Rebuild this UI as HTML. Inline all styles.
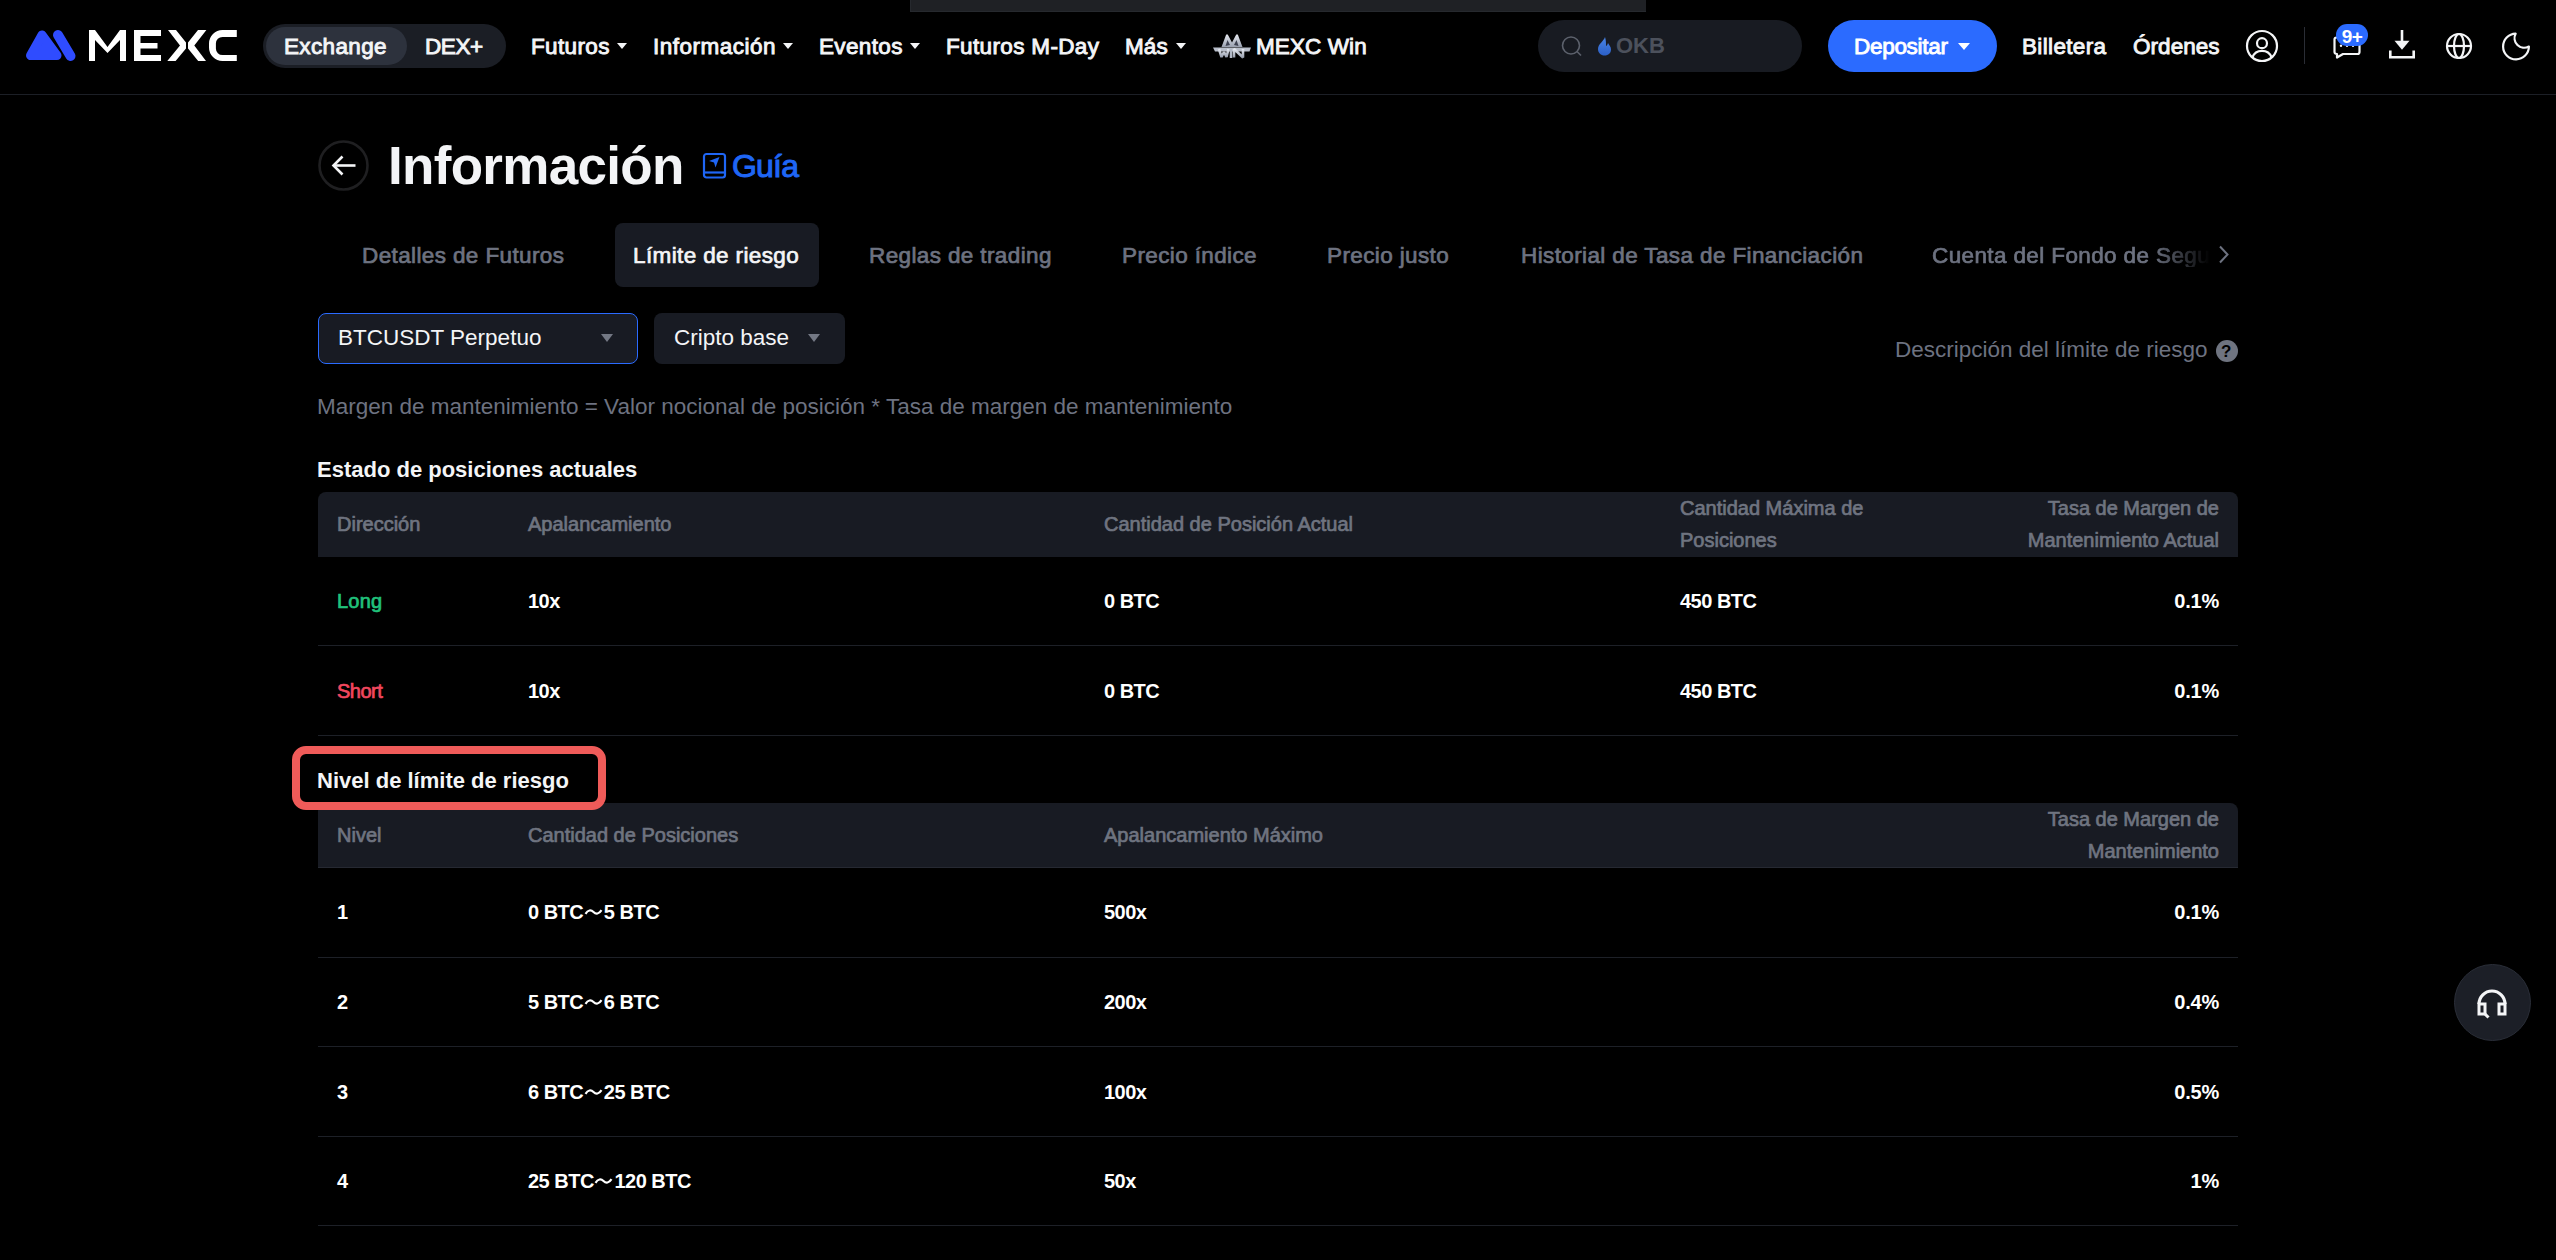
<!DOCTYPE html>
<html><head><meta charset="utf-8">
<style>
*{margin:0;padding:0;box-sizing:border-box}
html,body{width:2556px;height:1260px;overflow:hidden;background:#000;font-family:"Liberation Sans",sans-serif;color:#f3f4f6}
.a{position:absolute}
.t{position:absolute;white-space:nowrap;line-height:1}
.nav{font-size:22.5px;font-weight:400;color:#f4f5f7;-webkit-text-stroke:0.9px #f4f5f7;letter-spacing:0.35px}
.caret{position:absolute;width:0;height:0;border-left:5px solid transparent;border-right:5px solid transparent;border-top:6px solid #f4f5f7}
.gray{color:#6d7280}
.tab{font-size:22.5px;font-weight:400;color:#6d7280;-webkit-text-stroke:0.7px #6d7280;letter-spacing:0.38px}
.th{font-size:20px;color:#6f7480;-webkit-text-stroke:0.7px #6f7480;line-height:32px}
.td{font-size:20px;font-weight:700;color:#fff;letter-spacing:-0.5px}
.tl{display:inline-block;vertical-align:top;margin:0 0 0 -0.5px}
.line{position:absolute;left:318px;width:1920px;height:1px;background:#1d2027}
</style></head><body>

<!-- top gray strip -->
<div class="a" style="left:910px;top:0;width:736px;height:12px;background:#1f2125;border-left:1px solid #26292e;border-bottom:1px solid #26292e"></div>

<!-- header bottom border -->
<div class="a" style="left:0;top:94px;width:2556px;height:1px;background:#1c1f26"></div>

<!-- MEXC logo -->
<svg class="a" style="left:0;top:0" width="260" height="94" viewBox="0 0 260 94">
  <polygon points="42,35 30.5,55.5 57,55.5" fill="#2f4cff" stroke="#2f4cff" stroke-width="9" stroke-linejoin="round"/>
  <line x1="58" y1="35" x2="70.5" y2="56" stroke="#2f4cff" stroke-width="10" stroke-linecap="round"/>
  <g fill="#fff">
    <path d="M89 30h6l12.5 17 12.5-17h6v31h-6V40l-12.5 13L95 40v21h-6z"/>
    <path d="M134 30h27v6h-20.5v7h17v5.5h-17v6.6h20.5v5.9h-27z"/>
    <path d="M168 30H176L186 42.5V48.5L175.6 61H167.3L180 45.5Z"/>
    <path d="M206.4 30H198L188 42.5V48.5L198.2 61H206L194.3 45.5Z"/>
    <path d="M236.8 30h-14.3a13.5 13.5 0 0 0-13.5 13.5v4a13.5 13.5 0 0 0 13.5 13.5h14.3v-5.9h-14.3a6.6 6.6 0 0 1-6.6-6.6v-5a6.6 6.6 0 0 1 6.6-6.6h14.3z"/>
  </g>
</svg>

<!-- Exchange / DEX+ -->
<div class="a" style="left:263px;top:24px;width:243px;height:44px;border-radius:22px;background:#1b1e25"></div>
<div class="a" style="left:266px;top:27px;width:141px;height:38px;border-radius:19px;background:#2d323d"></div>
<div class="t nav" style="top:35.5px;left:284px">Exchange</div>
<div class="t nav" style="top:35.5px;left:425px;letter-spacing:-0.4px">DEX+</div>

<div class="t nav" style="top:35.5px;left:531px">Futuros</div><div class="caret" style="left:617px;top:43px"></div>
<div class="t nav" style="top:35.5px;left:653px;letter-spacing:0.5px">Información</div><div class="caret" style="left:783px;top:43px"></div>
<div class="t nav" style="top:35.5px;left:819px">Eventos</div><div class="caret" style="left:910px;top:43px"></div>
<div class="t nav" style="top:35.5px;left:946px">Futuros M-Day</div>
<div class="t nav" style="top:35.5px;left:1125px;letter-spacing:0.1px">Más</div><div class="caret" style="left:1176px;top:43px"></div>

<!-- MEXC Win icon -->
<svg class="a" style="left:1210px;top:30px" width="44" height="32" viewBox="0 0 44 32">
  <defs><linearGradient id="sil" x1="0" y1="0" x2="0" y2="1"><stop offset="0" stop-color="#e6e9f0"/><stop offset="1" stop-color="#9aa1b0"/></linearGradient></defs>
  <path d="M11.5 17 L16 5 Q17 3.5 18 5 L22 12.5 L26 5 Q27 3.5 28 5 L32.5 17Z" fill="url(#sil)"/>
  <path d="M15.5 16 L17.5 10 L20 15Z M28.5 16 L26.5 10 L24 15Z" fill="#3d4150"/>
  <path d="M3 17.5 L41 17.5 L39.5 21.5 L5 21.5Z" fill="#b9bfcb"/>
  <path d="M9 19 L11.5 27 L14 22 L16.5 27 L18.5 19" fill="none" stroke="url(#sil)" stroke-width="2.6" stroke-linejoin="bevel"/>
  <path d="M21 19 V28" stroke="#b3bac7" stroke-width="2.6"/>
  <path d="M24 27.5 V19 L33 27.5 V19" fill="none" stroke="url(#sil)" stroke-width="2.6" stroke-linejoin="bevel"/>
</svg>
<div class="t nav" style="top:35.5px;left:1256px;letter-spacing:0.1px">MEXC Win</div>

<!-- search -->
<div class="a" style="left:1538px;top:20px;width:264px;height:52px;border-radius:26px;background:#181b22"></div>
<svg class="a" style="left:1558px;top:33px" width="28" height="28" viewBox="0 0 28 28">
  <circle cx="13" cy="12.5" r="8.5" fill="none" stroke="#5c616c" stroke-width="1.6"/>
  <line x1="19" y1="18.5" x2="23" y2="22.5" stroke="#5c616c" stroke-width="1.6"/>
</svg>
<svg class="a" style="left:1596px;top:36px" width="18" height="20" viewBox="0 0 18 20">
  <defs><linearGradient id="fl" x1="0" y1="0" x2="0" y2="1"><stop offset="0" stop-color="#4a85e6"/><stop offset="1" stop-color="#2b5fc6"/></linearGradient></defs>
  <path d="M8 1 C9 5 15 8 15 13 C15 17 12 19.5 8.5 19.5 C4.5 19.5 2 17 2 13.5 C2 10.5 4 9 5 7 C5.5 9 6.5 10 7 10 C7 7 7 4 8 1Z" fill="url(#fl)" transform="translate(17,0) scale(-1,1)"/>
</svg>
<div class="t" style="left:1616px;top:35px;font-size:22px;font-weight:700;color:#4c515c">OKB</div>

<!-- Depositar -->
<div class="a" style="left:1828px;top:20px;width:169px;height:52px;border-radius:26px;background:#2b6bff"></div>
<div class="t nav" style="top:35.5px;left:1854px;color:#fff;-webkit-text-stroke:0.9px #fff;letter-spacing:-0.3px">Depositar</div><div class="caret" style="left:1958px;top:43px;border-left-width:6px;border-right-width:6px;border-top:7px solid #fff"></div>

<div class="t nav" style="top:35.5px;left:2022px">Billetera</div>
<div class="t nav" style="top:35.5px;left:2133px;letter-spacing:0.05px">Órdenes</div>

<!-- user icon -->
<svg class="a" style="left:2244px;top:28px" width="36" height="36" viewBox="0 0 36 36">
  <circle cx="18" cy="18" r="15" fill="none" stroke="#f4f5f7" stroke-width="2.2"/>
  <circle cx="18" cy="15.2" r="5" fill="none" stroke="#f4f5f7" stroke-width="2.2"/>
  <path d="M8.3 29.5 C10 25 13.5 22.8 18 22.8 C22.5 22.8 26 25 27.7 29.5" fill="none" stroke="#f4f5f7" stroke-width="2.2"/>
</svg>
<div class="a" style="left:2304px;top:27px;width:1px;height:37px;background:#2a2d35"></div>

<!-- chat icon -->
<svg class="a" style="left:2330px;top:32px" width="34" height="30" viewBox="0 0 34 30">
  <path d="M6.5 5.5 H27.5 Q29.5 5.5 29.5 7.5 V20 Q29.5 22 27.5 22 H13 L7 25.5 V22 Q4.5 22 4.5 20 V7.5 Q4.5 5.5 6.5 5.5Z" fill="none" stroke="#f4f5f7" stroke-width="2.2" stroke-linejoin="round"/>
  <circle cx="11" cy="13.8" r="1.2" fill="#f4f5f7"/><circle cx="17" cy="13.8" r="1.2" fill="#f4f5f7"/><circle cx="23" cy="13.8" r="1.2" fill="#f4f5f7"/>
</svg>
<div class="a" style="left:2336px;top:24px;width:32px;height:22px;border-radius:11px;background:#2b6bff"></div>
<div class="t" style="left:2336px;top:27px;width:32px;text-align:center;font-size:19px;font-weight:700;color:#fff;letter-spacing:-0.5px">9+</div>

<!-- download -->
<svg class="a" style="left:2386px;top:28px" width="32" height="32" viewBox="0 0 32 32">
  <path d="M16 2 V16" stroke="#f4f5f7" stroke-width="2.6"/>
  <path d="M8.5 12.8 L16 21.8 L23.5 12.8Z" fill="#f4f5f7"/>
  <path d="M4.3 22.5 V29.3 H27.7 V22.5" fill="none" stroke="#f4f5f7" stroke-width="2.6"/>
</svg>

<!-- globe -->
<svg class="a" style="left:2444px;top:31px" width="30" height="30" viewBox="0 0 30 30">
  <circle cx="15" cy="15" r="12" fill="none" stroke="#f4f5f7" stroke-width="2.2"/>
  <ellipse cx="15" cy="15" rx="5" ry="12" fill="none" stroke="#f4f5f7" stroke-width="2.2"/>
  <line x1="3" y1="15" x2="27" y2="15" stroke="#f4f5f7" stroke-width="2.2"/>
</svg>

<!-- moon -->
<svg class="a" style="left:2500px;top:31px" width="34" height="32" viewBox="0 0 34 32">
  <path d="M15.7 2.6 A12.9 12.9 0 1 0 28.9 15.5 A9.6 9.6 0 0 1 15.7 2.6Z" fill="none" stroke="#f4f5f7" stroke-width="2.2" stroke-linejoin="round"/>
</svg>

<!-- Title -->
<svg class="a" style="left:317px;top:139px" width="53" height="53" viewBox="0 0 53 53">
  <circle cx="26.5" cy="26.5" r="24" fill="none" stroke="#1f1f21" stroke-width="2.6"/>
  <path d="M16.5 26.5 H38.5" stroke="#f4f5f7" stroke-width="2.6"/>
  <path d="M25.5 17.5 L16.5 26.5 L25.5 35.5" fill="none" stroke="#f4f5f7" stroke-width="2.6"/>
</svg>
<div class="t" style="left:388px;top:138.5px;font-size:53px;font-weight:700;color:#f3f4f6;letter-spacing:-0.7px">Información</div>
<svg class="a" style="left:701px;top:151px" width="28" height="29" viewBox="0 0 28 29">
  <rect x="3" y="3" width="21" height="23.5" rx="2.5" fill="none" stroke="#1f66f5" stroke-width="2.2"/>
  <path d="M3 21.5 H24" stroke="#1f66f5" stroke-width="2.2"/>
  <path d="M8 10 L18.5 6 L14.5 16.5 L13 11.5Z" fill="#1f66f5"/>
</svg>
<div class="t" style="left:732px;top:149.5px;font-size:32px;color:#1f66f5;-webkit-text-stroke:1px #1f66f5;letter-spacing:-0.8px">Guía</div>

<!-- Tabs -->
<div class="t tab" style="left:362px;top:244.5px">Detalles de Futuros</div>
<div class="a" style="left:615px;top:223px;width:204px;height:64px;border-radius:8px;background:#181b23"></div>
<div class="t tab" style="left:633px;top:244.5px;color:#f4f5f7;-webkit-text-stroke-color:#f4f5f7">Límite de riesgo</div>
<div class="t tab" style="left:869px;top:244.5px">Reglas de trading</div>
<div class="t tab" style="left:1122px;top:244.5px">Precio índice</div>
<div class="t tab" style="left:1327px;top:244.5px">Precio justo</div>
<div class="t tab" style="left:1521px;top:244.5px">Historial de Tasa de Financiación</div>
<div class="t tab" style="left:1932px;top:244.5px;width:280px;overflow:hidden;-webkit-mask-image:linear-gradient(90deg,#000 0,#000 222px,transparent 278px)">Cuenta del Fondo de Seguro</div>
<svg class="a" style="left:2214px;top:244px" width="20" height="22" viewBox="0 0 20 22">
  <path d="M6 2.5 L13.5 10.5 L6 18.5" fill="none" stroke="#6d7280" stroke-width="2"/>
</svg>

<!-- dropdowns -->
<div class="a" style="left:318px;top:313px;width:320px;height:51px;border-radius:8px;background:#181b23;border:1.5px solid #2b6bff"></div>
<div class="t" style="left:338px;top:327px;font-size:22.5px;color:#f4f5f7">BTCUSDT Perpetuo</div>
<div class="caret" style="left:601px;top:334px;border-left-width:6px;border-right-width:6px;border-top:8px solid #737884"></div>
<div class="a" style="left:654px;top:313px;width:191px;height:51px;border-radius:8px;background:#181b23"></div>
<div class="t" style="left:674px;top:327px;font-size:22.5px;color:#f4f5f7">Cripto base</div>
<div class="caret" style="left:808px;top:334px;border-left-width:6px;border-right-width:6px;border-top:8px solid #737884"></div>

<div class="t gray" style="left:1895px;top:338.5px;font-size:22.5px">Descripción del límite de riesgo</div>
<div class="a" style="left:2216px;top:340px;width:22px;height:22px;border-radius:11px;background:#6f7480"></div>
<div class="t" style="left:2221px;top:343px;font-size:17px;font-weight:700;color:#000">?</div>

<div class="t gray" style="left:317px;top:395.5px;font-size:22.5px">Margen de mantenimiento = Valor nocional de posición * Tasa de margen de mantenimiento</div>

<div class="t" style="left:317px;top:458.5px;font-size:22px;font-weight:700;color:#f4f5f7">Estado de posiciones actuales</div>

<!-- Table 1 -->
<div class="a" style="left:318px;top:492px;width:1920px;height:65px;border-radius:8px 8px 0 0;background:#181b23"></div>
<div class="t th" style="left:337px;top:508px">Dirección</div>
<div class="t th" style="left:528px;top:508px">Apalancamiento</div>
<div class="t th" style="left:1104px;top:508px">Cantidad de Posición Actual</div>
<div class="t th" style="left:1680px;top:492px">Cantidad Máxima de<br>Posiciones</div>
<div class="t th" style="right:337px;top:492px;text-align:right">Tasa de Margen de<br>Mantenimiento Actual</div>

<div class="t td" style="left:337px;top:591px;color:#20c27b;font-weight:400;-webkit-text-stroke:0.7px #20c27b;letter-spacing:0.2px">Long</div>
<div class="t td" style="left:528px;top:591px">10x</div>
<div class="t td" style="left:1104px;top:591px">0 BTC</div>
<div class="t td" style="left:1680px;top:591px">450 BTC</div>
<div class="t td" style="right:337px;top:591px;letter-spacing:-0.2px">0.1%</div>
<div class="line" style="top:645px"></div>

<div class="t td" style="left:337px;top:681px;color:#f2475e;font-weight:400;-webkit-text-stroke:0.7px #f2475e">Short</div>
<div class="t td" style="left:528px;top:681px">10x</div>
<div class="t td" style="left:1104px;top:681px">0 BTC</div>
<div class="t td" style="left:1680px;top:681px">450 BTC</div>
<div class="t td" style="right:337px;top:681px;letter-spacing:-0.2px">0.1%</div>
<div class="line" style="top:735px"></div>

<!-- Nivel title -->
<div class="t" style="left:317px;top:769.5px;font-size:22px;font-weight:700;color:#f4f5f7">Nivel de límite de riesgo</div>

<!-- Table 2 -->
<div class="a" style="left:318px;top:803px;width:1920px;height:65px;border-radius:8px 8px 0 0;background:#181b23"></div>
<div class="line" style="top:867px;background:#262932"></div>
<div class="t th" style="left:337px;top:819px">Nivel</div>
<div class="t th" style="left:528px;top:819px">Cantidad de Posiciones</div>
<div class="t th" style="left:1104px;top:819px">Apalancamiento Máximo</div>
<div class="t th" style="right:337px;top:803px;text-align:right">Tasa de Margen de<br>Mantenimiento</div>

<!-- red highlight box -->
<div class="a" style="left:292px;top:746px;width:314px;height:64px;border:8px solid #ef5b59;border-radius:14px"></div>

<div class="t td" style="left:337px;top:902px">1</div>
<div class="t td" style="left:528px;top:902px">0 BTC<svg class="tl" width="21" height="20" viewBox="0 0 21 20"><path d="M2.5 11.8 C5 7.8 8 7.6 10.5 10 C13 12.4 16 12.2 18.5 8.2" fill="none" stroke="#fff" stroke-width="2.2"/></svg>5 BTC</div>
<div class="t td" style="left:1104px;top:902px">500x</div>
<div class="t td" style="right:337px;top:902px;letter-spacing:-0.2px">0.1%</div>
<div class="line" style="top:957px"></div>
<div class="t td" style="left:337px;top:992px">2</div>
<div class="t td" style="left:528px;top:992px">5 BTC<svg class="tl" width="21" height="20" viewBox="0 0 21 20"><path d="M2.5 11.8 C5 7.8 8 7.6 10.5 10 C13 12.4 16 12.2 18.5 8.2" fill="none" stroke="#fff" stroke-width="2.2"/></svg>6 BTC</div>
<div class="t td" style="left:1104px;top:992px">200x</div>
<div class="t td" style="right:337px;top:992px;letter-spacing:-0.2px">0.4%</div>
<div class="line" style="top:1046px"></div>
<div class="t td" style="left:337px;top:1081.5px">3</div>
<div class="t td" style="left:528px;top:1081.5px">6 BTC<svg class="tl" width="21" height="20" viewBox="0 0 21 20"><path d="M2.5 11.8 C5 7.8 8 7.6 10.5 10 C13 12.4 16 12.2 18.5 8.2" fill="none" stroke="#fff" stroke-width="2.2"/></svg>25 BTC</div>
<div class="t td" style="left:1104px;top:1081.5px">100x</div>
<div class="t td" style="right:337px;top:1081.5px;letter-spacing:-0.2px">0.5%</div>
<div class="line" style="top:1136px"></div>
<div class="t td" style="left:337px;top:1171px">4</div>
<div class="t td" style="left:528px;top:1171px">25 BTC<svg class="tl" width="21" height="20" viewBox="0 0 21 20"><path d="M2.5 11.8 C5 7.8 8 7.6 10.5 10 C13 12.4 16 12.2 18.5 8.2" fill="none" stroke="#fff" stroke-width="2.2"/></svg>120 BTC</div>
<div class="t td" style="left:1104px;top:1171px">50x</div>
<div class="t td" style="right:337px;top:1171px;letter-spacing:-0.2px">1%</div>
<div class="line" style="top:1225px"></div>

<!-- headset -->
<div class="a" style="left:2454px;top:964px;width:77px;height:77px;border-radius:50%;background:#1c1f27;border:1px solid #2a2e38"></div>
<svg class="a" style="left:2472px;top:983px" width="40" height="40" viewBox="0 0 40 40">
  <path d="M7 21 A13 13 0 0 1 33 21" fill="none" stroke="#f4f5f7" stroke-width="3.2"/>
  <rect x="7" y="21" width="6" height="10" fill="none" stroke="#f4f5f7" stroke-width="3"/>
  <rect x="27" y="21" width="6" height="10" fill="none" stroke="#f4f5f7" stroke-width="3"/>
  <path d="M13 31 L16.5 34.5" stroke="#f4f5f7" stroke-width="3"/>
</svg>

</body></html>
